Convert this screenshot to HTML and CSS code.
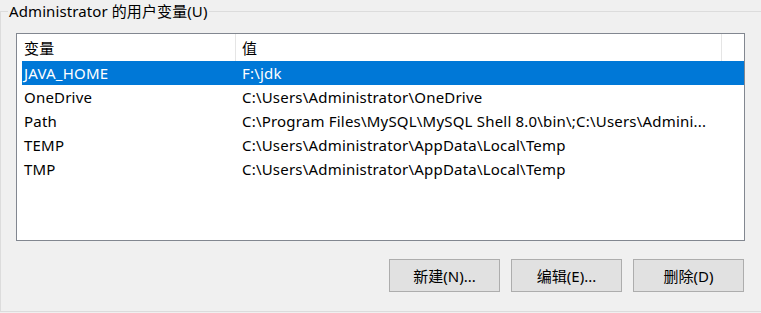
FILE: index.html
```html
<!DOCTYPE html>
<html lang="zh-CN">
  <head>
    <meta charset="UTF-8">
    <title>用户变量</title>
    <link rel="stylesheet" href="styles.css">
  </head>
  <body>
    <fieldset class="group">
      <legend>Administrator 的用户变量(U)</legend>
      <div class="list">
        <div class="row header">
          <div class="cell">变量</div>
          <div class="cell">值</div>
        </div>
        <div class="row selected">
          <div class="cell">JAVA_HOME</div>
          <div class="cell">F:\jdk</div>
        </div>
        <div class="row">
          <div class="cell">OneDrive</div>
          <div class="cell">C:\Users\Administrator\OneDrive</div>
        </div>
        <div class="row">
          <div class="cell">Path</div>
          <div class="cell">C:\Program Files\MySQL\MySQL Shell 8.0\bin\;C:\Users\Admini...</div>
        </div>
        <div class="row">
          <div class="cell">TEMP</div>
          <div class="cell">C:\Users\Administrator\AppData\Local\Temp</div>
        </div>
        <div class="row">
          <div class="cell">TMP</div>
          <div class="cell">C:\Users\Administrator\AppData\Local\Temp</div>
        </div>
      </div>
      <div class="actions">
        <button>新建(N)...</button>
        <button>编辑(E)...</button>
        <button>删除(D)</button>
      </div>
    </fieldset>
  </body>
</html>
```

FILE: styles.css
```css
*,
*::after,
*::before {
  box-sizing: border-box;
}

body {
  margin: 0;
  background: #f0f0f0;
  font-family: "Noto Sans", "Noto Sans CJK SC", sans-serif;
  font-size: 15px;
  color: #000;
}

.group {
  width: 100%;
  height: 312px;
  margin: 0;
  padding: 11px 0 0 15px;
  border: 1px solid #dcdcdc;
  border-right: none;
}

.group legend {
  margin-left: -8px;
  padding: 0 1px;
  line-height: 22px;
  letter-spacing: 0.1px;
}

.list {
  width: 729px;
  height: 208px;
  padding-left: 5px;
  background: #fff;
  border: 1px solid #828790;
}

.row {
  display: grid;
  grid-template-columns: 214px 486px;
  height: 24px;
  line-height: 24px;
  white-space: nowrap;
  letter-spacing: 0.2px;
}

.row .cell {
  overflow: hidden;
  padding-left: 2px;
}

.row .cell + .cell {
  padding-left: 6px;
}

.header {
  height: 27px;
  line-height: 29px;
}

.header .cell {
  border-right: 1px solid #e5e5e5;
}

.selected {
  background: #0078d7;
  color: #fff;
}

.actions {
  display: flex;
  gap: 11px;
  margin-top: 18px;
  width: 728px;
  justify-content: flex-end;
}

.actions button {
  width: 111px;
  height: 33px;
  font: inherit;
  color: #000;
  background: #e1e1e1;
  border: 1px solid #adadad;
  border-radius: 0;
}
```
